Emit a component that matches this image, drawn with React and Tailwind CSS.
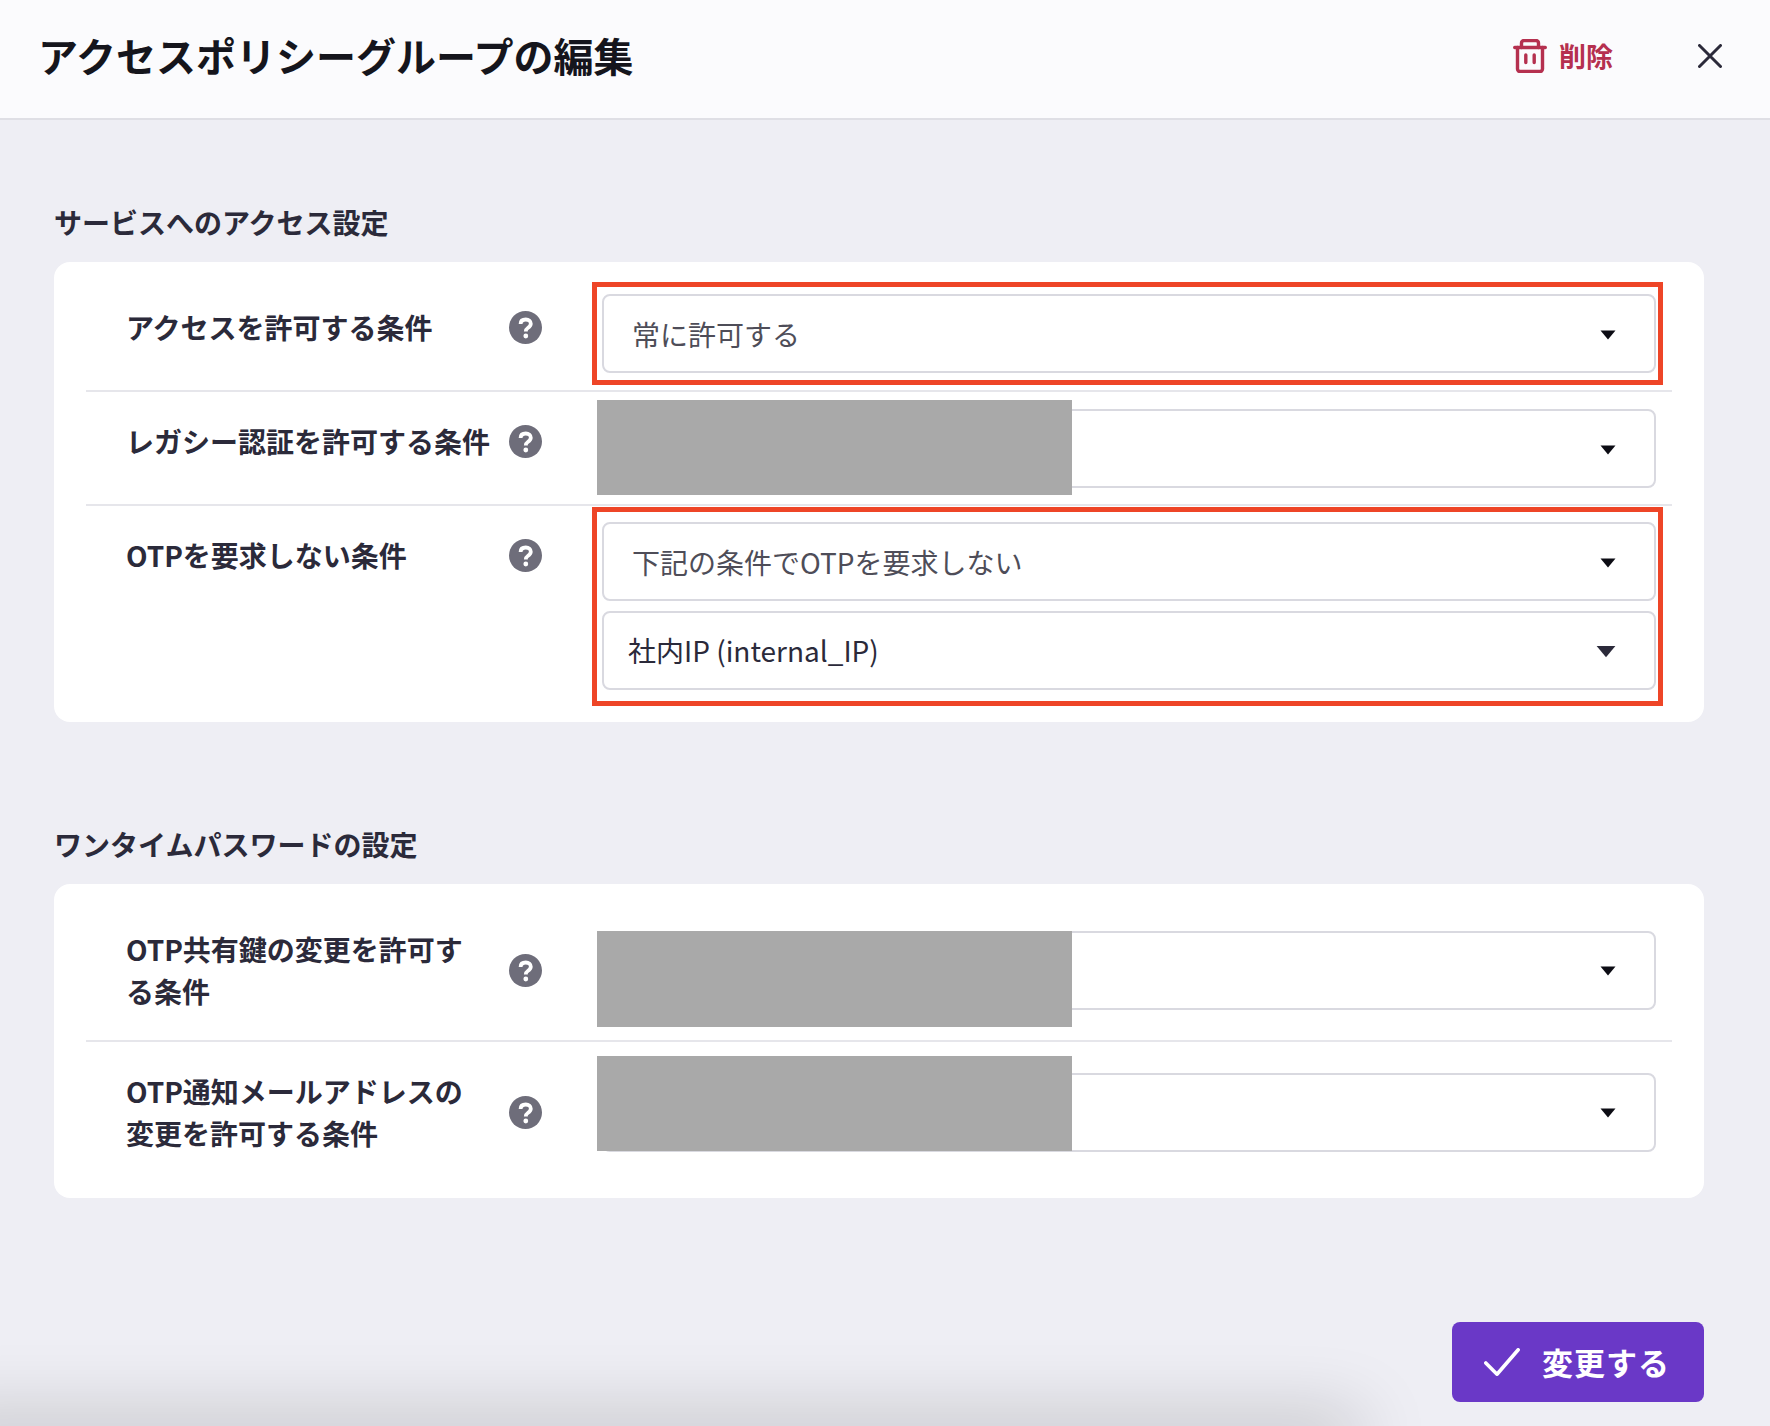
import React from "react";

const FONT = "[font-family:'Noto_Sans_CJK_JP','Noto_Sans',sans-serif]";

function Arrow({ big }) {
  return (
    <svg viewBox="0 0 16 10" className={big ? "w-[20px] h-[13px] shrink-0 block" : "w-[16px] h-[10px] shrink-0 block"}>
      <path d="M0.5 0.5H15.5L8 9.5Z" fill={big ? "#2b2a3a" : "#0c0c14"} />
    </svg>
  );
}

function Help() {
  return (
    <svg viewBox="0 0 33 33" className="w-[33px] h-[33px] shrink-0">
      <circle cx="16.5" cy="16.5" r="16.5" fill="#6e6d7a" />
      <path d="M11.6 13C11.6 10 13.8 8.5 16.8 8.5C19.8 8.5 21.8 10.3 21.8 12.8C21.8 15 20.3 16 18.8 17C17.3 18 16.8 18.6 16.8 20.5" fill="none" stroke="#fff" strokeWidth="3.8" />
      <circle cx="16.8" cy="25" r="2.4" fill="#fff" />
    </svg>
  );
}

function Select({ text, variant }) {
  const alt = variant === "value";
  return (
    <div className="h-[79px] w-full flex items-center justify-between rounded-[8px] border-2 border-[#d9d9e0] bg-white pr-[38px]">
      <span className={alt ? "pl-[24px] pb-[1px] text-[28px] text-[#2b2a3a]" : "pl-[28px] text-[28px] text-[#4e4d58]"}>{text}</span>
      <span className="pt-[2px]"><Arrow big={alt} /></span>
    </div>
  );
}

function Row({ lines, children, last, center, field }) {
  return (
    <div className={`flex mx-[32px] pl-[40px] pr-[16px] ${center ? "items-center" : "items-start"} ${last ? "" : "border-b-2 border-[#e6e6eb]"}`}>
      <div className={`w-[476px] shrink-0 flex items-center ${center ? "py-[28px]" : "pt-[28px] pb-[30px]"}`}>
        <div className="w-[383px] shrink-0 text-[28px] leading-[42px] font-bold text-[#2b2a3a] whitespace-nowrap">
          {lines.map((l) => (
            <div key={l}>{l}</div>
          ))}
        </div>
        <Help />
      </div>
      <div className={`flex-1 flex flex-col gap-[10px] ${field}`}>{children}</div>
    </div>
  );
}

function Section({ title, className, children }) {
  return (
    <section className={`ml-[54px] mr-[66px] ${className}`}>
      <h2 className="h-[40px] mb-[20px] leading-[40px] text-[28px] font-bold text-[#2b2a3a]">{title}</h2>
      <div className="bg-white rounded-[16px] py-[16px]">{children}</div>
    </section>
  );
}

function Mask({ className }) {
  return <div className={`absolute left-[597px] w-[475px] bg-[#a9a9a9] ${className}`} />;
}

export default function App() {
  return (
    <div className={`relative h-[1426px] w-[1770px] overflow-hidden bg-[#eeeef4] flex flex-col ${FONT}`}>
      <header className="h-[120px] shrink-0 bg-[#fbfbfd] border-b-2 border-[#dfdfe5] flex items-center pl-[38px] pr-[48px]">
        <h1 className="text-[40px] font-bold text-[#15151c] flex-1 pb-[8px]">アクセスポリシーグループの編集</h1>
        <div className="flex items-center gap-[12px] text-[#b5304f] pb-[6px]">
          <svg viewBox="0 0 34 34" className="w-[34px] h-[34px]" fill="none" stroke="currentColor" strokeWidth="3.4" strokeLinecap="round" strokeLinejoin="round">
            <path d="M1.7 8.5H32.3" />
            <path d="M4.5 8.5V30a2.5 2.5 0 0 0 2.5 2.5H27a2.5 2.5 0 0 0 2.5-2.5V8.5" />
            <path d="M8.5 8.5V4a2.5 2.5 0 0 1 2.5-2.5H23a2.5 2.5 0 0 1 2.5 2.5V8.5" />
            <path d="M12.8 16V23.5M21.2 16V23.5" />
          </svg>
          <span className="text-[27px] font-bold">削除</span>
        </div>
        <svg viewBox="0 0 24 24" className="w-[24px] h-[24px] ml-[85px] mb-[6px]" fill="none" stroke="#2b2a3a" strokeWidth="3" strokeLinecap="round">
          <path d="M1.5 1.5L22.5 22.5M22.5 1.5L1.5 22.5" />
        </svg>
      </header>

      <Section title="サービスへのアクセス設定" className="mt-[82px]">
        <Row lines={["アクセスを許可する条件"]} field="pt-[16px] pb-[17px]">
          <Select text="常に許可する" />
        </Row>
        <Row lines={["レガシー認証を許可する条件"]} field="pt-[17px] pb-[16px]">
          <Select text="" />
        </Row>
        <Row lines={["OTPを要求しない条件"]} last field="py-[16px]">
          <Select text="下記の条件でOTPを要求しない" />
          <Select text="社内IP (internal_IP)" variant="value" />
        </Row>
      </Section>

      <Section title="ワンタイムパスワードの設定" className="mt-[102px]">
        <Row lines={["OTP共有鍵の変更を許可す", "る条件"]} center>
          <Select text="" />
        </Row>
        <Row lines={["OTP通知メールアドレスの", "変更を許可する条件"]} last center>
          <Select text="" />
        </Row>
      </Section>

      <div className="mt-auto mb-[24px] mr-[66px] flex justify-end">
        <button className="relative z-10 w-[252px] h-[80px] rounded-[8px] bg-[#6a38c7] text-white flex items-center pl-[32px] gap-[22px]">
          <svg viewBox="0 0 36 28" className="w-[36px] h-[28px]" fill="none" stroke="#fff" strokeWidth="3.6" strokeLinecap="round" strokeLinejoin="round">
            <path d="M1.8 15L13 26.2L34.2 1.8" />
          </svg>
          <span className="text-[31px] font-bold tracking-[1px]">変更する</span>
        </button>
      </div>

      {/* annotation and redaction overlays */}
      <div className="absolute left-[592px] top-[282px] w-[1071px] h-[103px] border-[5px] border-[#ee4527]" />
      <div className="absolute left-[592px] top-[507px] w-[1071px] h-[199px] border-[5px] border-[#ee4527]" />
      <Mask className="top-[400px] h-[95px]" />
      <Mask className="top-[931px] h-[96px]" />
      <Mask className="top-[1056px] h-[95px]" />

      {/* shadow rising from below the page edge */}
      <div className="absolute left-[-60px] bottom-[-20px] w-[1410px] h-[20px] shadow-[0_0_70px_10px_rgba(0,0,0,0.22)]" />
    </div>
  );
}
